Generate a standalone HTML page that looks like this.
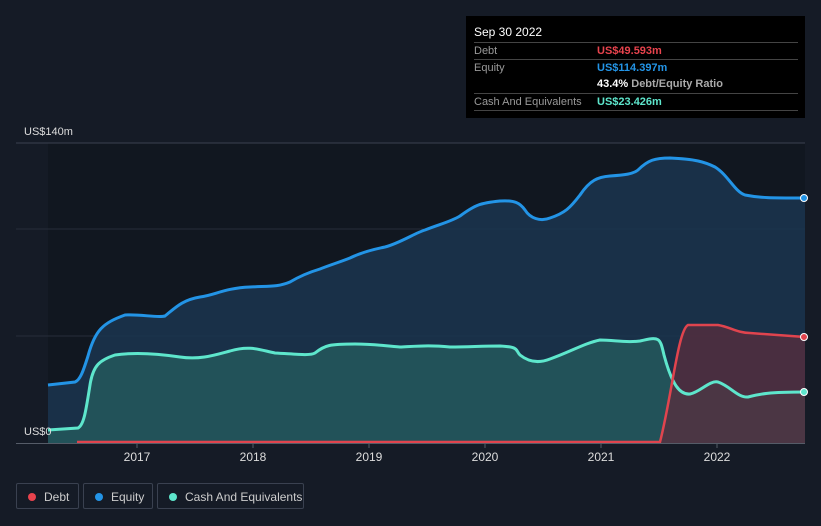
<!DOCTYPE html>
<html><head><meta charset="utf-8"><style>
body{margin:0;width:821px;height:526px;background:#151b26;font-family:"Liberation Sans",sans-serif;overflow:hidden;position:relative}
.tt{position:absolute;left:466px;top:16px;width:339px;height:102px;background:#000;color:#fff;font-size:11px}
.tt .h{position:absolute;left:8px;top:9px;font-size:12px}
.row{position:absolute;left:8px;width:324px;border-top:1px solid #444;height:17px;line-height:17px;color:#999}
.row span{position:absolute;left:123px;font-weight:bold}
.leg{position:absolute;top:483px;height:26px;border:1px solid #3a4150;border-radius:2px;color:#ccc;font-size:12px;line-height:26px;box-sizing:border-box}
.leg i{position:absolute;left:11px;top:9px;width:8px;height:8px;border-radius:50%}
.leg b{font-weight:normal;position:absolute;left:27px}
</style></head><body>
<svg width="821" height="526" style="position:absolute;left:0;top:0">
<rect x="48" y="143" width="757" height="300" fill="#111720"/>
<line x1="16" y1="143" x2="805" y2="143" stroke="#3a4150"/>
<line x1="16" y1="229" x2="805" y2="229" stroke="#262d3a"/>
<line x1="16" y1="336" x2="805" y2="336" stroke="#262d3a"/>
<path d="M48,385 L75,382 C80,380 83,372 88,356 C95,330 103,323 125,315 C140,314 158,318 165,316 C175,308 182,300 200,297 C215,295 225,288 250,287 C270,286 278,287 290,282 C300,276 310,272 320,269 C330,265 340,262 350,258 C360,253 370,250 385,247 C400,243 415,233 425,230 C440,224 450,222 460,216 C475,205 480,203 500,201 C515,200 520,203 525,210 C530,218 540,222 550,218 C565,213 570,208 580,195 C590,180 598,177 610,176 C625,175 633,174 638,170 C648,160 655,158 670,158 C695,159 705,162 715,167 C728,175 735,192 745,195 C760,198 770,198 805,198 L805,443 L48,443 Z" fill="#1b3550" fill-opacity="0.85"/>
<path d="M48,430 L78,428 C84,425 86,410 90,385 C93,365 100,360 115,355 C135,352 160,354 180,357 C200,360 215,355 230,351 C250,345 260,350 275,353 C295,354 310,356 315,353 C325,345 330,344 355,344 C375,344 385,346 400,347 C420,346 430,345 450,347 C470,347 480,346 500,346 C520,347 515,350 520,355 C530,363 540,363 550,359 C570,352 585,343 600,340 C615,340 625,343 640,341 C660,336 660,338 664,355 C672,385 680,395 690,394 C700,392 710,380 718,382 C730,386 738,398 748,397 C760,394 768,392 805,392 L805,443 L48,443 Z" fill="#245b5e" fill-opacity="0.8"/>
<path d="M655,443 L662,440 C672,395 678,330 688,325 L718,325 C730,327 738,333 750,333 L805,337 L805,443 Z" fill="#5a2d3e" fill-opacity="0.75"/>
<path d="M48,385 L75,382 C80,380 83,372 88,356 C95,330 103,323 125,315 C140,314 158,318 165,316 C175,308 182,300 200,297 C215,295 225,288 250,287 C270,286 278,287 290,282 C300,276 310,272 320,269 C330,265 340,262 350,258 C360,253 370,250 385,247 C400,243 415,233 425,230 C440,224 450,222 460,216 C475,205 480,203 500,201 C515,200 520,203 525,210 C530,218 540,222 550,218 C565,213 570,208 580,195 C590,180 598,177 610,176 C625,175 633,174 638,170 C648,160 655,158 670,158 C695,159 705,162 715,167 C728,175 735,192 745,195 C760,198 770,198 805,198" fill="none" stroke="#2394e6" stroke-width="3"/>
<path d="M48,430 L78,428 C84,425 86,410 90,385 C93,365 100,360 115,355 C135,352 160,354 180,357 C200,360 215,355 230,351 C250,345 260,350 275,353 C295,354 310,356 315,353 C325,345 330,344 355,344 C375,344 385,346 400,347 C420,346 430,345 450,347 C470,347 480,346 500,346 C520,347 515,350 520,355 C530,363 540,363 550,359 C570,352 585,343 600,340 C615,340 625,343 640,341 C660,336 660,338 664,355 C672,385 680,395 690,394 C700,392 710,380 718,382 C730,386 738,398 748,397 C760,394 768,392 805,392" fill="none" stroke="#5ee6cc" stroke-width="3"/>
<path d="M77,442 L660,442 C672,395 678,330 688,325 L718,325 C730,327 738,333 750,333 L805,337" fill="none" stroke="#e0444e" stroke-width="2.5"/>
<line x1="16" y1="443.5" x2="805" y2="443.5" stroke="#555c68"/>
<g stroke="#555c68"><line x1="137" y1="443" x2="137" y2="448"/><line x1="253" y1="443" x2="253" y2="448"/><line x1="369" y1="443" x2="369" y2="448"/><line x1="485" y1="443" x2="485" y2="448"/><line x1="601" y1="443" x2="601" y2="448"/><line x1="717" y1="443" x2="717" y2="448"/></g>
<g fill="#ddd" font-size="12" text-anchor="middle" font-family="Liberation Sans"><text x="137" y="461">2017</text><text x="253" y="461">2018</text><text x="369" y="461">2019</text><text x="485" y="461">2020</text><text x="601" y="461">2021</text><text x="717" y="461">2022</text></g>
<text x="24" y="135" fill="#ddd" font-size="11">US$140m</text>
<text x="24" y="435" fill="#ddd" font-size="11">US$0</text>
<circle cx="804" cy="198" r="3.5" fill="#2394e6" stroke="#fff" stroke-width="1"/>
<circle cx="804" cy="337" r="3.5" fill="#e0444e" stroke="#fff" stroke-width="1"/>
<circle cx="804" cy="392" r="3.5" fill="#5ee6cc" stroke="#fff" stroke-width="1"/>
</svg>
<div class="tt"><div class="h">Sep 30 2022</div>
<div class="row" style="top:26px">Debt<span style="color:#e8434d">US$49.593m</span></div>
<div class="row" style="top:43px">Equity<span style="color:#2394e6">US$114.397m</span></div>
<div class="row" style="top:60px;border-top:none"><span style="color:#fff">43.4% <b style="color:#aaa">Debt/Equity Ratio</b></span></div>
<div class="row" style="top:77px">Cash And Equivalents<span style="color:#5ee6cc">US$23.426m</span></div>
<div class="row" style="top:94px;height:0"></div>
</div>
<div class="leg" style="left:16px;width:63px"><i style="background:#e8434d"></i><b>Debt</b></div>
<div class="leg" style="left:83px;width:70px"><i style="background:#2394e6"></i><b>Equity</b></div>
<div class="leg" style="left:157px;width:147px"><i style="background:#5ee6cc"></i><b>Cash And Equivalents</b></div>
</body></html>
